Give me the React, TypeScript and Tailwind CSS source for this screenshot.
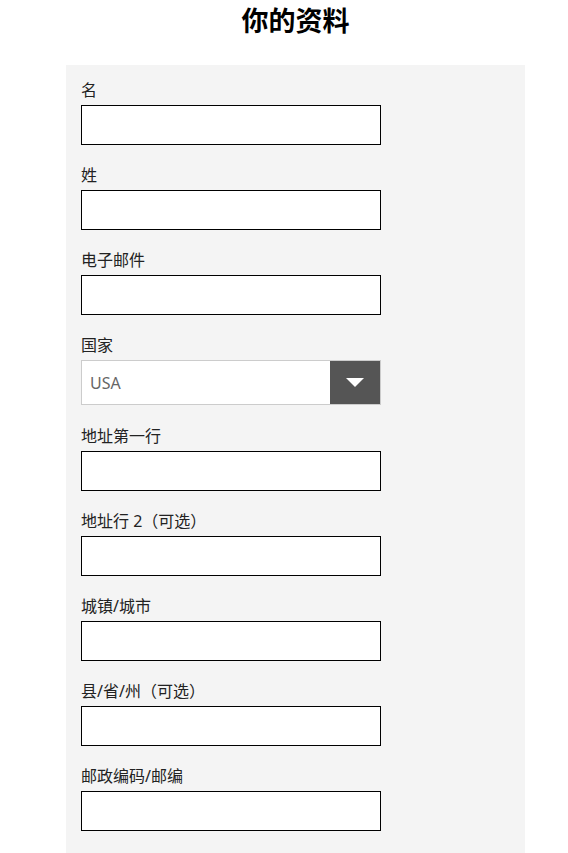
const FONT = { fontFamily: '"Noto Sans", "Noto Sans CJK SC", sans-serif' };

const fields = [
  { label: "名" },
  { label: "姓" },
  { label: "电子邮件" },
  { label: "国家", select: true },
  { label: "地址第一行" },
  { label: "地址行 2（可选）" },
  { label: "城镇/城市" },
  { label: "县/省/州（可选）" },
  { label: "邮政编码/邮编" },
];

function CountrySelect() {
  return (
    <div className="mb-[1px] flex h-[45px] w-[300px] border border-[#cccccc] bg-white">
      <div className="flex flex-1 items-center pl-2 text-[16px] text-[#666666]">USA</div>
      <div className="flex w-[50px] items-center justify-center bg-[#555555]">
        <svg width="18" height="9" viewBox="0 0 18 9">
          <path d="M0 0 H18 L9 9 Z" fill="#ffffff" />
        </svg>
      </div>
    </div>
  );
}

export default function App() {
  return (
    <div className="min-h-[853px] bg-white text-black" style={FONT}>
      <div className="ml-[66px] w-[459px]">
        <h1 className="pt-[1px] text-center text-[27px] font-bold leading-[40px]">你的资料</h1>
        <div className="mt-[24px] flex min-h-[788px] flex-col gap-[20px] bg-[#f4f4f4] px-[15px] pt-[15px] pb-[22px]">
          {fields.map((f) => (
            <div key={f.label} className="flex flex-col">
              <label className="mb-[5px] text-[16px] leading-[20px] text-[#222222]">{f.label}</label>
              {f.select ? (
                <CountrySelect />
              ) : (
                <input className="h-[40px] w-[300px] border border-black bg-white px-2 outline-none" />
              )}
            </div>
          ))}
        </div>
      </div>
    </div>
  );
}
